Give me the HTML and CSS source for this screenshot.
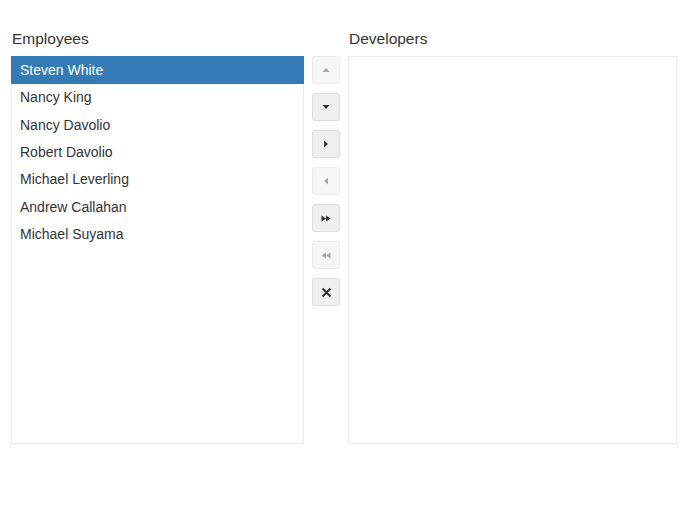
FILE: index.html
```html
<!DOCTYPE html>
<html lang="en">
<head>
    <meta charset="UTF-8">
    <title>Dual ListBox</title>
    <link rel="stylesheet" href="styles.css">
</head>
<body>
    <div class="dual-list">
        <div class="list-col list-left">
            <h4 class="list-title">Employees</h4>
            <ul class="list-box">
                <li class="list-item selected">Steven White</li>
                <li class="list-item">Nancy King</li>
                <li class="list-item">Nancy Davolio</li>
                <li class="list-item">Robert Davolio</li>
                <li class="list-item">Michael Leverling</li>
                <li class="list-item">Andrew Callahan</li>
                <li class="list-item">Michael Suyama</li>
            </ul>
        </div>

        <div class="toolbar">
            <button class="tool-btn" disabled title="Move Up">
                <svg width="8" height="6" viewBox="0 0 8 6"><path d="M4 1 L7.5 5 L0.5 5 Z"/></svg>
            </button>
            <button class="tool-btn" title="Move Down">
                <svg width="8" height="6" viewBox="0 0 8 6"><path d="M0.5 1 L7.5 1 L4 5 Z"/></svg>
            </button>
            <button class="tool-btn" title="Move To">
                <svg width="6" height="8" viewBox="0 0 6 8"><path d="M1 0.5 L5 4 L1 7.5 Z"/></svg>
            </button>
            <button class="tool-btn" disabled title="Move From">
                <svg width="6" height="8" viewBox="0 0 6 8"><path d="M5 0.5 L1 4 L5 7.5 Z"/></svg>
            </button>
            <button class="tool-btn" title="Move All To">
                <svg width="10" height="7" viewBox="0 0 10 7"><path d="M0.5 0.5 L5 3.5 L0.5 6.5 Z M5 0.5 L9.5 3.5 L5 6.5 Z"/></svg>
            </button>
            <button class="tool-btn" disabled title="Move All From">
                <svg width="10" height="7" viewBox="0 0 10 7"><path d="M5 0.5 L0.5 3.5 L5 6.5 Z M9.5 0.5 L5 3.5 L9.5 6.5 Z"/></svg>
            </button>
            <button class="tool-btn" title="Clear">
                <svg width="11" height="11" viewBox="0 0 11 11"><path d="M1.5 1.5 L9.5 9.5 M9.5 1.5 L1.5 9.5" stroke="#333" stroke-width="2" fill="none"/></svg>
            </button>
        </div>

        <div class="list-col list-right">
            <h4 class="list-title">Developers</h4>
            <ul class="list-box"></ul>
        </div>
    </div>
</body>
</html>
```

FILE: styles.css
```css
* {
    margin: 0;
    padding: 0;
    box-sizing: border-box;
}
body {
    font-family: "Helvetica Neue", "Liberation Sans", Arial, sans-serif;
    color: #333;
    background-color: #fff;
}
.dual-list {
    display: flex;
    align-items: flex-start;
    padding: 29px 13px 0 11px;
}
.list-left {
    width: 293px;
}
.list-right {
    width: 329px;
}
.list-title {
    font-size: 15.5px;
    font-weight: normal;
    line-height: 20px;
    margin-bottom: 7px;
    padding-left: 1px;
    color: #333;
}
.list-box {
    list-style: none;
    height: 388px;
    border: 1px solid #ebebeb;
    background-color: #fff;
}
.list-item {
    font-size: 14px;
    line-height: 27.33px;
    padding-left: 8px;
    color: #333;
}
.list-item.selected {
    background-color: #337ab7;
    color: #fff;
    margin: -1px -1px 0 -1px;
    padding-left: 9px;
    line-height: 28.33px;
}
.toolbar {
    display: flex;
    flex-direction: column;
    gap: 9px;
    margin: 27px 8px 0 8px;
}
.tool-btn {
    width: 28px;
    height: 28px;
    display: flex;
    align-items: center;
    justify-content: center;
    background-color: #efefef;
    border: 1px solid #dcdcdc;
    border-radius: 3px;
    cursor: pointer;
}
.tool-btn svg {
    fill: #333;
}
.tool-btn:disabled {
    background-color: #f6f6f6;
    border-color: #ececec;
    cursor: default;
}
.tool-btn:disabled svg {
    fill: #a8a8a8;
}
```
